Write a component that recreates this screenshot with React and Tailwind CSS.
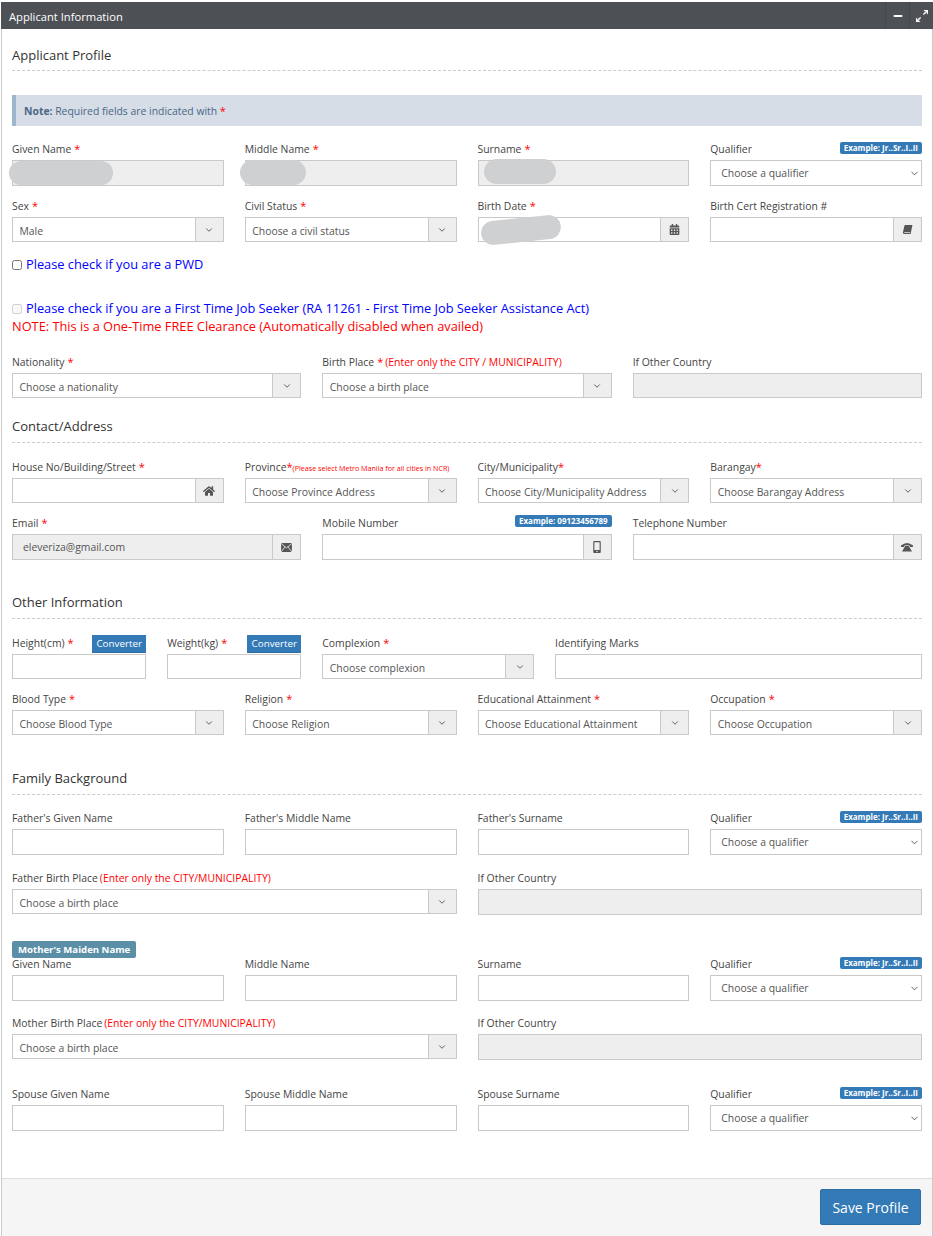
import React from 'react';
import { FaHome, FaCalendarAlt, FaMobileAlt } from 'react-icons/fa';
import { FiChevronDown, FiMinus } from 'react-icons/fi';
import { BsArrowsAngleExpand } from 'react-icons/bs';

const BookIcon = () => (
    <svg width="11" height="11" viewBox="0 0 12 12" fill="currentColor">
        <path d="M3.6 1H11.4L9.4 10.8H2.2Q.8 10.8 1 9.2L2.6 2Q2.8 1 3.6 1Z" />
        <path d="M2.4 9.3H8.8" stroke="#eeeeee" strokeWidth=".8" />
    </svg>
);

const EnvelopeIcon = () => (
    <svg width="11" height="9" viewBox="0 0 12 10">
        <rect width="12" height="10" fill="currentColor" />
        <path d="M0 .5L6 5.5L12 .5M0 10L4.5 4M12 10L7.5 4" fill="none" stroke="#eeeeee" strokeWidth=".9" />
    </svg>
);

const OldPhoneIcon = () => (
    <svg width="12" height="10" viewBox="0 0 12 10" fill="currentColor">
        <path d="M0 3.5Q6-1.5 12 3.5V5H9L8.5 3.5Q6 2.8 3.5 3.5L3 5H0Z" />
        <path d="M4.2 4H7.8L11 9.5H1Z" />
    </svg>
);

const Star = () => <span className="text-[#ff0000] text-[11px] ml-[3px]">*</span>;
const TightStar = () => <span className="text-[#ff0000] text-[11px]">*</span>;

const Heading = ({ children, className = '' }) => (
    <div className={`h-[26px] pb-[7px] border-b border-dashed border-[#cccccc] text-[13px] leading-[18px] text-[#333333] ${className}`}>
        {children}
    </div>
);

const Field = ({ span, label, required, hint, badge, badgeTop = 'mt-[3px]', button, children }) => (
    <div className={span}>
        <div className="h-[21px] flex justify-between items-start text-[10.4px] leading-[20px] text-[#444444] whitespace-nowrap">
            <span>
                {label}
                {required && <Star />}
                {hint}
            </span>
            {badge && (
                <span className={`${badgeTop} h-[12px] px-[4px] rounded-[2px] bg-[#337ab7] text-white text-[8px] leading-[12px] font-bold`}>
                    {badge}
                </span>
            )}
            {button && (
                <button className="mt-[2px] w-[54px] h-[18px] bg-[#337ab7] border-b border-[#2e6da4] text-white text-[9.8px] leading-[17px]">
                    Converter
                </button>
            )}
        </div>
        {children}
    </div>
);

const TextInput = ({ disabled, h = 'h-[26px]' }) => (
    <input
        disabled={disabled}
        className={`block w-full ${h} px-[7px] border border-[#c9c9c9] text-[10.4px] ${disabled ? 'bg-[#eeeeee]' : 'bg-white'}`}
    />
);

const Addon = ({ children }) => (
    <span className="flex-none w-[28px] flex items-center justify-center bg-[#eeeeee] border-l border-[#c9c9c9] text-[#555555]">
        {children}
    </span>
);

const ChosenSelect = ({ text }) => (
    <div className="flex h-[25px] border border-[#c9c9c9] bg-white">
        <span className="flex-1 pl-[6.5px] text-[10.4px] leading-[26px] text-[#555555] whitespace-nowrap overflow-hidden">{text}</span>
        <Addon><FiChevronDown size={10} strokeWidth={2.2} /></Addon>
    </div>
);

const IconInput = ({ value, disabled, h = 'h-[25px]', icon }) => (
    <div className={`flex ${h} border border-[#c9c9c9] ${disabled ? 'bg-[#eeeeee]' : 'bg-white'}`}>
        <span className="flex-1 pl-[10px] text-[10.4px] leading-[25px] text-[#555555]">{value}</span>
        <Addon>{icon}</Addon>
    </div>
);

const Qualifier = () => (
    <div className="relative">
        <select className="block w-full h-[26px] pl-[10px] pt-[2px] appearance-none border border-[#c9c9c9] bg-white text-[10.4px] text-[#555555]">
            <option>Choose a qualifier</option>
        </select>
        <FiChevronDown size={11} strokeWidth={1.8} className="absolute right-[2px] top-[8px] text-[#444444]" />
    </div>
);

const Red = ({ children }) => <span className="text-[#ff0000] ml-[2px]">{children}</span>;

const Blot = ({ className }) => <div className={`absolute bg-[#cfd0d1] rounded-full ${className}`} />;

const App = () => {
    return (
        <div className="w-[933px] h-[1236px] bg-white pt-[2px] font-['Open_Sans',sans-serif]">
            <div className="ml-[1px] w-[932px] h-[1234px] flex flex-col border-l border-r border-[#cccccc]">
                <div className="flex-none h-[27px] -ml-[1px] -mr-[1px] flex justify-between bg-[#4d5055] text-white">
                    <span className="pl-[8px] text-[11.2px] leading-[29px]">Applicant Information</span>
                    <div className="flex">
                        <span className="w-[24px] flex items-center justify-center border-l border-[#44474b]">
                            <FiMinus size={12} strokeWidth={4} />
                        </span>
                        <span className="w-[24px] flex items-center justify-center border-l border-[#44474b]">
                            <BsArrowsAngleExpand size={12} strokeWidth={1.2} />
                        </span>
                    </div>
                </div>

                <div className="flex-1 pl-[10px] pr-[10px] pt-[16px]">
                    <Heading className="pt-[1px]">Applicant Profile</Heading>

                    <div className="mt-[24px] h-[31px] pl-[8px] bg-[#d6dde7] border-l-[4px] border-[#9db6cc] text-[10.4px] leading-[31px] text-[#4a6785]">
                        <b>Note:</b> Required fields are indicated with <span className="text-[#ff0000] text-[11px]">*</span>
                    </div>

                    <div className="relative mt-[13px] grid grid-cols-12 gap-x-[21px]">
                        <Field span="col-span-3" label="Given Name" required><TextInput disabled /></Field>
                        <Field span="col-span-3" label="Middle Name" required><TextInput disabled /></Field>
                        <Field span="col-span-3" label="Surname" required><TextInput disabled /></Field>
                        <Field span="col-span-3" label="Qualifier" badge="Example: Jr..Sr..I..II"><Qualifier /></Field>
                        <Blot className="left-[-3px] top-[22px] w-[104px] h-[24px]" />
                        <Blot className="left-[228px] top-[21px] w-[66px] h-[25px]" />
                        <Blot className="left-[472px] top-[20px] w-[72px] h-[25px]" />
                    </div>

                    <div className="relative mt-[10px] grid grid-cols-12 gap-x-[21px]">
                        <Field span="col-span-3" label="Sex" required><ChosenSelect text="Male" /></Field>
                        <Field span="col-span-3" label="Civil Status" required><ChosenSelect text="Choose a civil status" /></Field>
                        <Field span="col-span-3" label="Birth Date" required><IconInput icon={<FaCalendarAlt size={11} />} /></Field>
                        <Field span="col-span-3" label="Birth Cert Registration #"><IconInput icon={<BookIcon />} /></Field>
                        <Blot className="left-[469px] top-[22px] w-[80px] h-[24px] -rotate-6" />
                    </div>

                    <label className="mt-[13px] flex items-center h-[18px] pt-[2px] text-[12.8px] text-[#0000ff]">
                        <input type="checkbox" className="w-[10px] h-[10px] mr-[4px]" />
                        Please check if you are a PWD
                    </label>

                    <label className="mt-[26px] flex items-center h-[18px] pt-[2px] text-[12.8px] text-[#0000ff]">
                        <input type="checkbox" disabled className="w-[10px] h-[10px] mr-[4px]" />
                        Please check if you are a First Time Job Seeker (RA 11261 - First Time Job Seeker Assistance Act)
                    </label>
                    <div className="h-[18px] text-[12.8px] leading-[19px] text-[#ff0000]">
                        NOTE: This is a One-Time FREE Clearance (Automatically disabled when availed)
                    </div>

                    <div className="mt-[17px] grid grid-cols-12 gap-x-[21px]">
                        <Field span="col-span-4" label="Nationality" required><ChosenSelect text="Choose a nationality" /></Field>
                        <Field span="col-span-4" label="Birth Place" required hint={<Red>(Enter only the CITY / MUNICIPALITY)</Red>}><ChosenSelect text="Choose a birth place" /></Field>
                        <Field span="col-span-4" label="If Other Country"><TextInput disabled h="h-[25px]" /></Field>
                    </div>

                    <Heading className="mt-[19px]">Contact/Address</Heading>

                    <div className="mt-[14px] grid grid-cols-12 gap-x-[21px]">
                        <Field span="col-span-3" label="House No/Building/Street" required><IconInput icon={<FaHome size={12} />} /></Field>
                        <Field span="col-span-3" label="Province" hint={<><TightStar /><span className="text-[#ff0000] text-[7.15px]">(Please select Metro Manila for all cities in NCR)</span></>}><ChosenSelect text="Choose Province Address" /></Field>
                        <Field span="col-span-3" label="City/Municipality" hint={<TightStar />}><ChosenSelect text="Choose City/Municipality Address" /></Field>
                        <Field span="col-span-3" label="Barangay" hint={<TightStar />}><ChosenSelect text="Choose Barangay Address" /></Field>
                    </div>

                    <div className="mt-[10px] grid grid-cols-12 gap-x-[21px]">
                        <Field span="col-span-4" label="Email" required><IconInput disabled h="h-[26px]" value="eleveriza@gmail.com" icon={<EnvelopeIcon />} /></Field>
                        <Field span="col-span-4" label="Mobile Number" badge="Example: 09123456789" badgeTop="mt-[2px]"><IconInput h="h-[26px]" icon={<FaMobileAlt size={12} />} /></Field>
                        <Field span="col-span-4" label="Telephone Number"><IconInput h="h-[26px]" icon={<OldPhoneIcon />} /></Field>
                    </div>

                    <Heading className="mt-[33px]">Other Information</Heading>

                    <div className="mt-[14px] grid grid-cols-12 gap-x-[21px]">
                        <Field span="col-span-2" label="Height(cm)" required button><TextInput h="h-[25px]" /></Field>
                        <Field span="col-span-2" label="Weight(kg)" required button><TextInput h="h-[25px]" /></Field>
                        <Field span="col-span-3" label="Complexion" required><ChosenSelect text="Choose complexion" /></Field>
                        <Field span="col-span-5" label="Identifying Marks"><TextInput h="h-[25px]" /></Field>
                    </div>

                    <div className="mt-[10px] grid grid-cols-12 gap-x-[21px]">
                        <Field span="col-span-3" label="Blood Type" required><ChosenSelect text="Choose Blood Type" /></Field>
                        <Field span="col-span-3" label="Religion" required><ChosenSelect text="Choose Religion" /></Field>
                        <Field span="col-span-3" label="Educational Attainment" required><ChosenSelect text="Choose Educational Attainment" /></Field>
                        <Field span="col-span-3" label="Occupation" required><ChosenSelect text="Choose Occupation" /></Field>
                    </div>

                    <Heading className="mt-[34px]">Family Background</Heading>

                    <div className="mt-[13px] grid grid-cols-12 gap-x-[21px]">
                        <Field span="col-span-3" label="Father's Given Name"><TextInput /></Field>
                        <Field span="col-span-3" label="Father's Middle Name"><TextInput /></Field>
                        <Field span="col-span-3" label="Father's Surname"><TextInput /></Field>
                        <Field span="col-span-3" label="Qualifier" badge="Example: Jr..Sr..I..II"><Qualifier /></Field>
                    </div>

                    <div className="mt-[13px] grid grid-cols-12 gap-x-[21px]">
                        <Field span="col-span-6" label="Father Birth Place" hint={<Red>(Enter only the CITY/MUNICIPALITY)</Red>}><ChosenSelect text="Choose a birth place" /></Field>
                        <Field span="col-span-6" label="If Other Country"><TextInput disabled /></Field>
                    </div>

                    <div className="mt-[26px] -mb-[4px] w-fit h-[17px] px-[6px] rounded-[2px] bg-[#5b8fa8] text-white text-[9.6px] leading-[17px] font-bold">
                        Mother's Maiden Name
                    </div>

                    <div className="grid grid-cols-12 gap-x-[21px]">
                        <Field span="col-span-3" label="Given Name"><TextInput /></Field>
                        <Field span="col-span-3" label="Middle Name"><TextInput /></Field>
                        <Field span="col-span-3" label="Surname"><TextInput /></Field>
                        <Field span="col-span-3" label="Qualifier" badge="Example: Jr..Sr..I..II"><Qualifier /></Field>
                    </div>

                    <div className="mt-[12px] grid grid-cols-12 gap-x-[21px]">
                        <Field span="col-span-6" label="Mother Birth Place" hint={<Red>(Enter only the CITY/MUNICIPALITY)</Red>}><ChosenSelect text="Choose a birth place" /></Field>
                        <Field span="col-span-6" label="If Other Country"><TextInput disabled /></Field>
                    </div>

                    <div className="mt-[24px] grid grid-cols-12 gap-x-[21px]">
                        <Field span="col-span-3" label="Spouse Given Name"><TextInput /></Field>
                        <Field span="col-span-3" label="Spouse Middle Name"><TextInput /></Field>
                        <Field span="col-span-3" label="Spouse Surname"><TextInput /></Field>
                        <Field span="col-span-3" label="Qualifier" badge="Example: Jr..Sr..I..II"><Qualifier /></Field>
                    </div>
                </div>

                <div className="flex-none h-[58px] flex justify-end items-start pt-[10px] pr-[11px] bg-[#f5f5f5] border-t border-[#dddddd]">
                    <button className="w-[101px] h-[36px] bg-[#337ab7] border border-[#2e6da4] rounded-[2px] text-white text-[14px]">
                        Save Profile
                    </button>
                </div>
            </div>
        </div>
    );
};

export default App;
